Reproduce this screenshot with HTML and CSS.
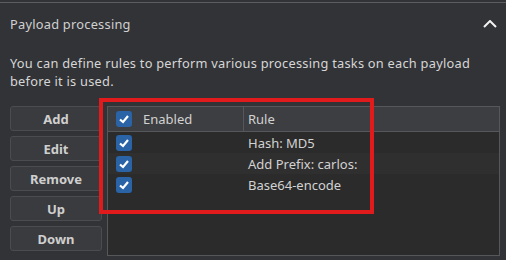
FILE: index.html
```html
<!DOCTYPE html>
<html lang="en">
<head>
  <meta charset="UTF-8">
  <title>Payload processing</title>
  <link rel="stylesheet" href="styles.css">
</head>
<body>
  <div class="panel">
    <div class="panel-header">
      <span class="panel-title">Payload processing</span>
      <svg class="chevron" width="14" height="8" viewBox="0 0 14 8">
        <path d="M1 7 L7 1 L13 7" fill="none" stroke="#f2f2f2" stroke-width="2"/>
      </svg>
    </div>

    <p class="desc">You can define rules to perform various processing tasks on each payload before it is used.</p>

    <div class="rules">
      <div class="buttons">
        <button class="btn">Add</button>
        <button class="btn">Edit</button>
        <button class="btn">Remove</button>
        <button class="btn">Up</button>
        <button class="btn">Down</button>
      </div>

      <div class="table">
        <div class="row head">
          <div class="cell c1"><span class="check"></span>Enabled</div>
          <div class="cell c2">Rule</div>
        </div>
        <div class="row">
          <div class="cell c1"><span class="check"></span></div>
          <div class="cell c2">Hash: MD5</div>
        </div>
        <div class="row alt">
          <div class="cell c1"><span class="check"></span></div>
          <div class="cell c2">Add Prefix: carlos:</div>
        </div>
        <div class="row">
          <div class="cell c1"><span class="check"></span></div>
          <div class="cell c2">Base64-encode</div>
        </div>
      </div>

      <!-- annotation frame -->
      <div class="highlight"></div>
    </div>
  </div>
</body>
</html>
```

FILE: styles.css
```css
* {
  box-sizing: border-box;
}
body {
  margin: 0;
  padding-top: 2px;
  background: #323337;
  font-family: 'Noto Sans', sans-serif;
  font-size: 13px;
  color: #d2d2d2;
}
.panel {
  border-top: 1px solid #5c5d60;
}
.panel-header {
  display: flex;
  align-items: center;
  justify-content: space-between;
  padding: 12px 9px 12px 10px;
  line-height: 18px;
}
.panel-title {
  font-size: 12.8px;
  letter-spacing: 0.25px;
  color: #d0d0d0;
}
.chevron {
  display: block;
}
.desc {
  margin: 9px 0 0;
  padding: 0 30px 0 10px;
  line-height: 18px;
  font-size: 12.8px;
  letter-spacing: 0.25px;
  color: #d6d6d6;
}
.rules {
  position: relative;
  display: flex;
  gap: 5px;
  margin-top: 16px;
  padding-left: 10px;
}
.buttons {
  display: flex;
  flex-direction: column;
  gap: 5px;
  width: 92px;
}
.btn {
  height: 25px;
  background: #3a3b3e;
  border: 1px solid #4b4c4f;
  border-radius: 3px;
  color: #cfcfcf;
  font-family: 'Noto Sans', sans-serif;
  font-size: 13px;
  font-weight: bold;
  padding: 0;
}
.table {
  width: 393px;
  height: 150px;
  border: 1px solid #56575a;
  background: #2b2b2b;
}
.row {
  display: flex;
  height: 21px;
  align-items: center;
}
.row.alt {
  background: #2f2f30;
}
.row.head {
  height: 25px;
  background: #3d3e41;
  border-bottom: 1px solid #56575a;
}
.cell {
  display: flex;
  align-items: center;
  height: 100%;
}
.c1 {
  width: 136px;
  padding-left: 8px;
}
.head .c1 {
  border-right: 1px solid #56575a;
}
.c2 {
  padding-left: 4px;
}
.check {
  width: 16px;
  height: 16px;
  border-radius: 3px;
  background: #2a63a6 url("data:image/svg+xml;utf8,<svg xmlns='http://www.w3.org/2000/svg' width='16' height='16'><path d='M4 8.5 L7 11 L12 5' fill='none' stroke='white' stroke-width='2.2'/></svg>") no-repeat center;
  margin-right: 11px;
}
.highlight {
  position: absolute;
  left: 99px;
  top: -8px;
  width: 275px;
  height: 116px;
  border: 4px solid #e11b1b;
}
```
